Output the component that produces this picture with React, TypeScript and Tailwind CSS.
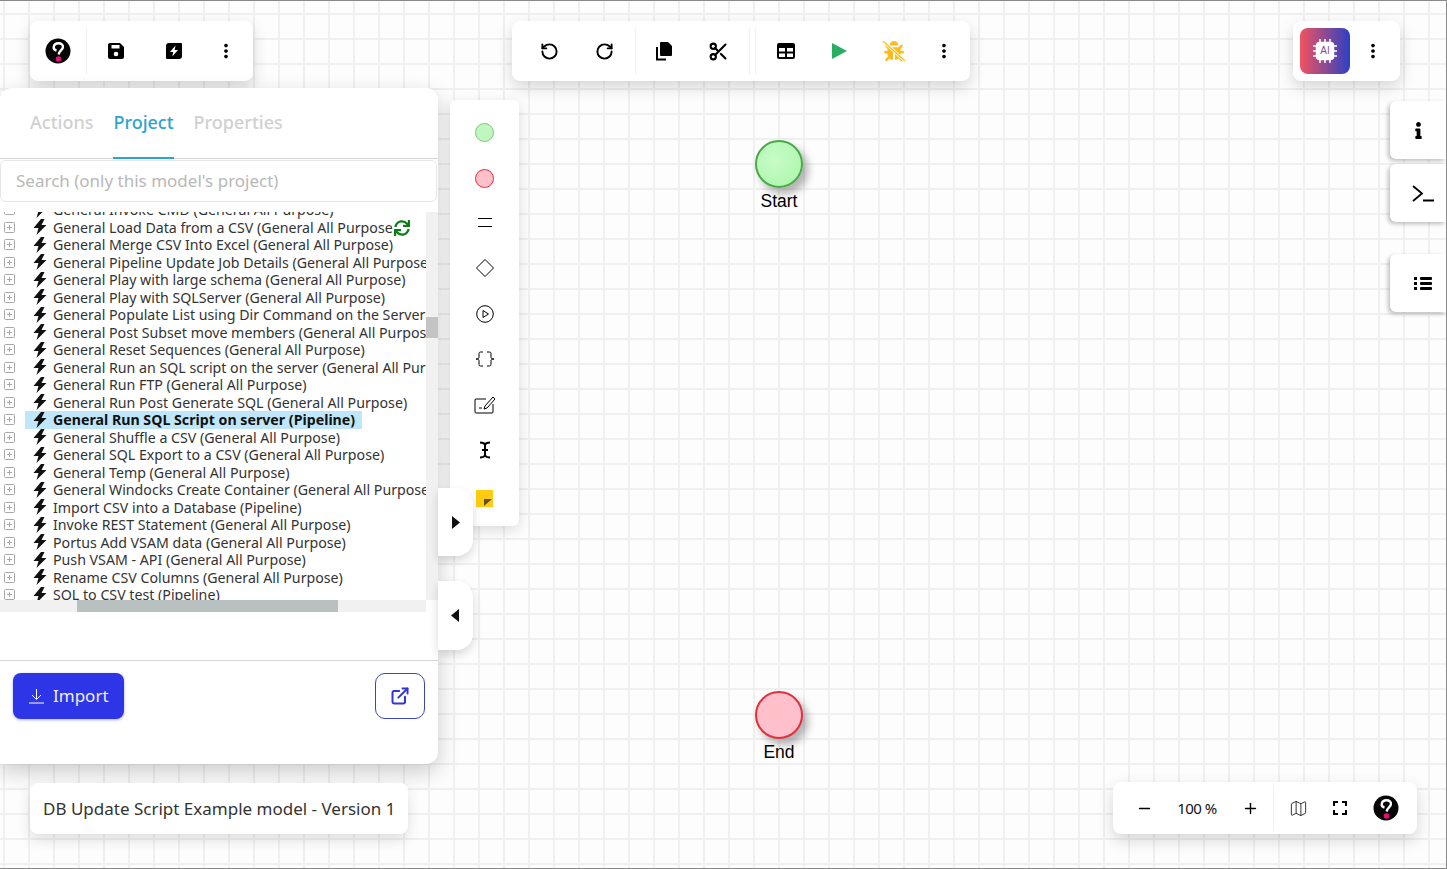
import { FaBug, FaInfo, FaSync } from 'react-icons/fa';
import { MdMoreVert } from 'react-icons/md';
import { ExternalLink, Map, Minus, Plus, RotateCcw, RotateCw, Scissors } from 'lucide-react';

const ui = "font-['Noto_Sans',sans-serif]";

const rows = [
  'General Invoke CMD (General All Purpose)',
  'General Load Data from a CSV (General All Purpose)',
  'General Merge CSV Into Excel (General All Purpose)',
  'General Pipeline Update Job Details (General All Purpose)',
  'General Play with large schema (General All Purpose)',
  'General Play with SQLServer (General All Purpose)',
  'General Populate List using Dir Command on the Server (General All Purpose)',
  'General Post Subset move members (General All Purpose)',
  'General Reset Sequences (General All Purpose)',
  'General Run an SQL script on the server (General All Purpose)',
  'General Run FTP (General All Purpose)',
  'General Run Post Generate SQL (General All Purpose)',
  'General Run SQL Script on server (Pipeline)',
  'General Shuffle a CSV (General All Purpose)',
  'General SQL Export to a CSV (General All Purpose)',
  'General Temp (General All Purpose)',
  'General Windocks Create Container (General All Purpose)',
  'Import CSV into a Database (Pipeline)',
  'Invoke REST Statement (General All Purpose)',
  'Portus Add VSAM data (General All Purpose)',
  'Push VSAM - API (General All Purpose)',
  'Rename CSV Columns (General All Purpose)',
  'SQL to CSV test (Pipeline)',
];

function Logo({ size = 26 }: { size?: number }) {
  return (
    <svg width={size} height={size} viewBox="0 0 26 26">
      <circle cx="13" cy="13" r="12.5" fill="#050505" />
      <path d="M11.500 12.500C9.500 12 8.500 10.800 8.700 9.200C9 6.800 11 5.300 13.500 5.300C16.300 5.300 18.300 7 17.900 9.500C17.500 12 14.200 12.500 13.700 16.500" fill="none" stroke="#fff" strokeWidth="2.400" />
      <circle cx="13.500" cy="21" r="2.800" fill="#e6107c" />
    </svg>
  );
}

function SaveIcon() {
  return (
    <svg width="18" height="18" viewBox="0 0 18 18">
      <path d="M3 1h10l4 4v10a2 2 0 0 1-2 2H3a2 2 0 0 1-2-2V3a2 2 0 0 1 2-2z" fill="#000" />
      <rect x="4.500" y="3" width="8" height="3.500" fill="#fff" />
      <circle cx="9" cy="12" r="2.300" fill="#fff" />
    </svg>
  );
}

function BoltSquare() {
  return (
    <svg width="18" height="18" viewBox="0 0 18 18">
      <path d="M4 1h12a1 1 0 0 1 1 1v12a3 3 0 0 1-3 3H2a1 1 0 0 1-1-1V4a3 3 0 0 1 3-3z" fill="#000" />
      <path d="M10.500 3.500 5 10h3.200L7.300 14.500 13 8H9.700z" fill="#fff" />
    </svg>
  );
}

function TreeBolt() {
  return (
    <svg width="14" height="16" viewBox="0 0 14 16" className="mr-[6px] shrink-0">
      <path d="M8 0 .5 9h5L3.500 16 13.500 6H8.500L11.500 0z" fill="#111" />
    </svg>
  );
}

function CopyIcon() {
  return (
    <svg width="18" height="20" viewBox="0 0 18 20">
      <path d="M6 1h7l4 4v9a1 1 0 0 1-1 1H6a1 1 0 0 1-1-1V2a1 1 0 0 1 1-1z" fill="#000" />
      <path d="M2 6v12.500h9" fill="none" stroke="#000" strokeWidth="2" />
    </svg>
  );
}

function TableIcon() {
  return (
    <svg width="18" height="16" viewBox="0 0 18 16">
      <rect width="18" height="16" rx="2" fill="#000" />
      <rect x="2" y="5" width="6" height="3.500" fill="#fff" />
      <rect x="10" y="5" width="6" height="3.500" fill="#fff" />
      <rect x="2" y="10.500" width="6" height="3.500" fill="#fff" />
      <rect x="10" y="10.500" width="6" height="3.500" fill="#fff" />
    </svg>
  );
}

function BugOff() {
  return (
    <div className="relative w-[24px] h-[20px] flex items-center justify-center">
      <FaBug size={20} color="#fdbb1f" />
      <svg className="absolute inset-0" width="24" height="20" viewBox="0 0 24 20">
        <path d="M1 0 23 20" stroke="#fff" strokeWidth="3" />
        <path d="M1 0 23 20" stroke="#fdbb1f" strokeWidth="1.300" />
      </svg>
    </div>
  );
}

function FullscreenIcon() {
  return (
    <svg width="14" height="14" viewBox="0 0 14 14" fill="none" stroke="#000" strokeWidth="2">
      <path d="M1 5V1h4M9 1h4v4M13 9v4H9M5 13H1V9" />
    </svg>
  );
}

function PlusBox() {
  return (
    <svg width="11" height="11" viewBox="0 0 11 11" fill="none" stroke="#a8a8a8">
      <rect x=".5" y=".5" width="10" height="10" rx="1" />
      <path d="M3 5.500h5M5.500 3v5" />
    </svg>
  );
}

function ChipIcon() {
  return (
    <div className="relative w-[24px] h-[24px] flex items-center justify-center">
      <svg className="absolute inset-0" width="24" height="24" viewBox="0 0 24 24" fill="none" stroke="#fff" strokeWidth="1.500">
        <rect x="3.500" y="3.500" width="17" height="17" rx="3" fill="#fff" />
        <path d="M7 0v3M12 0v3M17 0v3M7 21v3M12 21v3M17 21v3M0 7h3M0 12h3M0 17h3M21 7h3M21 12h3M21 17h3" />
      </svg>
      <span className="relative text-[10px] leading-none text-[#8a4a90] font-['Liberation_Sans',sans-serif]">AI</span>
    </div>
  );
}

function Bar({ className, children }: { className: string; children: React.ReactNode }) {
  return (
    <div className={`absolute flex items-center bg-white rounded-lg shadow-[0_6px_16px_rgba(0,0,0,0.16)] ${className}`}>
      {children}
    </div>
  );
}

function Slot({ w, children }: { w: string; children: React.ReactNode }) {
  return <div className={`flex items-center justify-center ${w}`}>{children}</div>;
}

function Sep({ className = '' }: { className?: string }) {
  return <div className={`w-px h-[46px] bg-[#f0f0f0] shrink-0 ${className}`} />;
}

function Tree() {
  return (
    <div className="relative h-[400px] flex flex-col overflow-hidden">
      <div className="flex h-[388px]">
        <div className="w-[426px] overflow-hidden">
          <div className="mt-[-11px]">
            {rows.map((r, i) => (
              <div key={r} className="flex items-center h-[17.5px] text-[14.2px] text-[#333] whitespace-nowrap">
                <div className="w-[25px] pl-[4px] flex shrink-0">
                  <PlusBox />
                </div>
                <div className={`flex items-center h-full pl-[8px] pr-[7px] ${i === 12 ? 'bg-[#bfe6fa] font-bold text-[#111]' : ''}`}>
                  <TreeBolt />
                  <span>{r}</span>
                </div>
              </div>
            ))}
          </div>
        </div>
        <div className="relative w-[12px] bg-[#f1f1f1]">
          <div className="absolute top-[105px] h-[21px] w-full bg-[#c4c4c4]" />
        </div>
      </div>
      <div className="relative w-[426px] h-[12px] bg-[#f1f1f1]">
        <div className="absolute left-[77px] w-[261px] h-full bg-[#b9c0c0]" />
      </div>
      <div className="absolute left-[393px] top-[7px] w-[18px] h-[18px] flex items-center justify-center bg-white">
        <FaSync size={16} color="#0a7d14" />
      </div>
    </div>
  );
}

function Palette() {
  return (
    <div className="absolute left-[450px] top-[99px] w-[69px] h-[426px] flex flex-col items-center pt-[10px] bg-white rounded-md shadow-[0_4px_14px_rgba(0,0,0,0.14)]">
      {[
        <div key="a" className="w-[19px] h-[19px] rounded-full bg-[#c0f7c0] border border-[#7cc87c]" />,
        <div key="b" className="w-[19px] h-[19px] rounded-full bg-[#ffc0cb] border-[1.5px] border-[#e0303c]" />,
        <div key="c" className="w-[14px] h-[9px] border-y border-black" />,
        <svg key="d" width="20" height="20" viewBox="0 0 20 20" fill="none" stroke="#000"><path d="M10 1.500 18.500 10 10 18.500 1.500 10z" /></svg>,
        <svg key="e" width="18" height="18" viewBox="0 0 18 18" fill="none" stroke="#000"><circle cx="9" cy="9" r="8.300" /><path d="M7 5.500 12.500 9 7 12.500z" /></svg>,
        <svg key="f" width="20" height="16" viewBox="0 0 20 16" fill="none" stroke="#000"><path d="M8 1H5.500C4 1 4 2 4 4v2.500C4 7.500 2.500 8 1 8c1.500 0 3 .5 3 1.500V12c0 2 0 3 1.500 3H8M12 1h2.500C16 1 16 2 16 4v2.500c0 1 1.500 1.500 3 1.500-1.500 0-3 .5-3 1.500V12c0 2 0 3-1.500 3H12" /></svg>,
        <svg key="g" width="22" height="19" viewBox="0 0 22 19" fill="none" stroke="#000"><path d="M12 4H2a1 1 0 0 0-1 1v12a1 1 0 0 0 1 1h16a1 1 0 0 0 1-1V9M5 13h3" /><path d="M10 14l1-3 8-9 2 2-8 9z" /></svg>,
        <svg key="h" width="10" height="18" viewBox="0 0 10 18" fill="none" stroke="#000" strokeWidth="2"><path d="M0 1.500c2.500 0 4 .5 5 2 1-1.500 2.500-2 5-2M5 3.500v11M0 16.500c2.500 0 4-.5 5-2 1 1.500 2.500 2 5 2M2 9h6" /></svg>,
      ].map((icon, i) => (
        <div key={i} className={`h-[45.5px] flex items-center justify-center ${i === 2 ? 'mt-[-1px]' : ''}`}>{icon}</div>
      ))}
      <div className="h-[45.5px] mt-[3px] flex items-center justify-center">
        <svg width="17" height="17" viewBox="0 0 17 17"><rect width="17" height="17" fill="#ffcc10" /><path d="M8 16V9h8z" fill="#5f5030" /></svg>
      </div>
    </div>
  );
}

export default function App() {
  return (
    <div className={`relative w-full h-screen overflow-hidden border border-[#8a8a8a] border-l-0 bg-[#fdfdfd] bg-[linear-gradient(to_right,#f0f0f0_2px,transparent_2px),linear-gradient(to_bottom,#f0f0f0_2px,transparent_2px)] bg-[size:25px_25px] bg-[position:3px_12px] ${ui}`}>
      <Bar className="left-[30px] top-[20px] w-[223px] h-[60px]">
        <Slot w="w-[56px]"><Logo /></Slot>
        <Sep />
        <Slot w="w-[58px]"><SaveIcon /></Slot>
        <Slot w="w-[58px]"><BoltSquare /></Slot>
        <Slot w="w-[46px]"><MdMoreVert size={22} color="#000" /></Slot>
      </Bar>

      <Bar className="left-[512px] top-[20px] w-[458px] h-[60px] pl-[10px]">
        <Slot w="w-[54px]"><RotateCcw size={19} color="#000" strokeWidth={2.4} /></Slot>
        <Slot w="w-[56px]"><RotateCw size={19} color="#000" strokeWidth={2.4} /></Slot>
        <Sep className="ml-[3px]" />
        <Slot w="w-[56px]"><CopyIcon /></Slot>
        <Slot w="w-[52px]"><Scissors size={21} color="#000" strokeWidth={2.4} /></Slot>
        <Sep className="ml-[5px]" />
        <Sep className="ml-[5px]" />
        <Slot w="w-[60px]"><TableIcon /></Slot>
        <Slot w="w-[46px]">
          <svg width="15" height="16" viewBox="0 0 15 16"><path d="M0 0 15 8 0 16z" fill="#27ae60" /></svg>
        </Slot>
        <Slot w="w-[64px]"><BugOff /></Slot>
        <Slot w="w-[36px]"><MdMoreVert size={22} color="#000" /></Slot>
      </Bar>

      <Bar className="left-[1293px] top-[20px] w-[107px] h-[60px] pl-[7px]">
        <div className="w-[50px] h-[46px] rounded-lg flex items-center justify-center bg-[linear-gradient(90deg,#f2535f,#2c40c4)]">
          <ChipIcon />
        </div>
        <Slot w="w-[46px]"><MdMoreVert size={22} color="#000" /></Slot>
      </Bar>

      <div className="absolute left-0 top-[87px] w-[438px] h-[676px] flex flex-col bg-white rounded-r-xl rounded-tl-xl shadow-[0_8px_22px_rgba(0,0,0,0.2)]">
        <div className="flex h-[71px] pl-[30px] gap-[20px] border-b border-[#d4d4d4] text-[18px] font-medium text-[#d0d0d0]">
          <div className="pt-[21px]">Actions</div>
          <div className="pt-[21px] h-[71px] text-[#2fa3cf] border-b-2 border-[#2fa3cf]">Project</div>
          <div className="pt-[21px]">Properties</div>
        </div>
        <div className="h-[42px] mr-[1px] ml-0 mt-[1px] flex items-center pl-[15px] border border-[#e6e6e6] rounded-md text-[17px] text-[#b8b8b8]">
          Search (only this model's project)
        </div>
        <div className="mt-[10px]"><Tree /></div>
        <div className="mt-[48px] h-[104px] flex justify-between items-start pt-[12px] pl-[13px] pr-[13px] border-t border-[#d4d4d4]">
          <button className="flex items-center w-[111px] h-[46px] pl-[16px] gap-[9px] rounded-lg bg-[#2d35e6] text-[#eef] text-[17px] shadow-[0_1px_3px_rgba(45,53,230,0.4)]">
            <svg width="15" height="16" viewBox="0 0 15 16" fill="none" stroke="#fff"><path d="M7.500 1v10M3 7l4.500 4.500L12 7M0 15h15" /></svg>
            Import
          </button>
          <button className="flex items-center justify-center w-[50px] h-[46px] rounded-[10px] border border-[#3c46b8] bg-white">
            <ExternalLink size={20} color="#3038d0" strokeWidth={2.4} />
          </button>
        </div>
      </div>

      <Palette />

      <div className="absolute left-[438px] top-[487px] w-[35px] h-[68px] flex items-center justify-center pl-[1px] bg-white rounded-r-2xl shadow-[0_4px_10px_rgba(0,0,0,0.15)]">
        <svg width="8" height="13" viewBox="0 0 8 13"><path d="M0 0 8 6.500 0 13z" fill="#111" /></svg>
      </div>
      <div className="absolute left-[438px] top-[580px] w-[35px] h-[69px] flex items-center justify-center pr-[1px] bg-white rounded-r-2xl shadow-[0_4px_10px_rgba(0,0,0,0.15)]">
        <svg width="8" height="13" viewBox="0 0 8 13"><path d="M8 0 0 6.500 8 13z" fill="#111" /></svg>
      </div>

      <div className="absolute left-[30px] top-[782px] w-[378px] h-[51px] flex items-center pl-[13px] bg-white rounded-lg text-[17px] text-[#333] whitespace-nowrap shadow-[0_6px_14px_rgba(0,0,0,0.12)]">
        DB Update Script Example model - Version 1
      </div>

      <div className="absolute left-[755px] top-[139px] w-[48px] h-[48px] rounded-full border-2 border-[#4aa84a] bg-[radial-gradient(circle_at_40%_40%,#c8fcc8,#a8f5a8)] shadow-[5px_6px_9px_rgba(0,0,0,0.3)]" />
      <div className="absolute left-[729px] top-[189px] w-[100px] text-center text-[17.5px] leading-[22px] text-black font-['Liberation_Sans',sans-serif]">Start</div>
      <div className="absolute left-[755px] top-[690px] w-[48px] h-[48px] rounded-full border-2 border-[#e03040] bg-[#ffc0cb] shadow-[5px_6px_9px_rgba(0,0,0,0.3)]" />
      <div className="absolute left-[729px] top-[740px] w-[100px] text-center text-[17.5px] leading-[22px] text-black font-['Liberation_Sans',sans-serif]">End</div>

      <div className="absolute right-0 top-[100px] flex flex-col">
        <div className="w-[56px] h-[58px] flex items-center justify-center bg-white rounded-l-md shadow-[-2px_2px_4px_rgba(0,0,0,0.25)]">
          <FaInfo size={17} color="#000" />
        </div>
        <div className="mt-[5px] w-[56px] h-[58px] flex items-center justify-center pl-[9px] bg-white rounded-l-md shadow-[-2px_2px_4px_rgba(0,0,0,0.25)]">
          <svg width="22" height="17" viewBox="0 0 22 17" fill="none" stroke="#000" strokeWidth="1.800"><path d="M1 1 10 8.500 1 16M11 15.500h11" /></svg>
        </div>
        <div className="mt-[32px] w-[56px] h-[58px] flex items-center justify-center pl-[9px] bg-white rounded-l-md shadow-[-2px_2px_4px_rgba(0,0,0,0.25)]">
          <svg width="18" height="15" viewBox="0 0 18 15" fill="#000">
            <rect x="0" y="1" width="3" height="3" />
            <rect x="6" y="1" width="12" height="3" rx="1" />
            <rect x="0" y="6" width="3" height="3" />
            <rect x="6" y="6" width="12" height="3" rx="1" />
            <rect x="0" y="11" width="3" height="3" />
            <rect x="6" y="11" width="12" height="3" rx="1" />
          </svg>
        </div>
      </div>

      <Bar className="left-[1113px] top-[781px] w-[304px] h-[52px]">
        <Slot w="w-[62px]"><Minus size={17} color="#000" strokeWidth={2} /></Slot>
        <Slot w="w-[44px]"><span className="text-[15px] tracking-[-0.5px] whitespace-nowrap text-[#111]">100 %</span></Slot>
        <Slot w="w-[54px] pl-[8px]"><Plus size={17} color="#000" strokeWidth={2} /></Slot>
        <Sep />
        <Slot w="w-[48px]"><Map size={19} color="#000" strokeWidth={1} /></Slot>
        <Slot w="w-[36px]"><FullscreenIcon /></Slot>
        <Slot w="w-[56px]"><Logo /></Slot>
      </Bar>
    </div>
  );
}
